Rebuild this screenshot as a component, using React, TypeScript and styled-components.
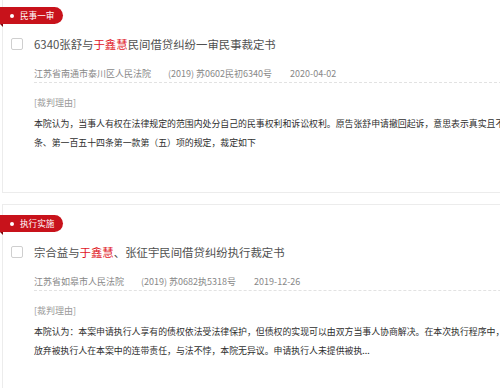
import React, { FC } from "react";
import styled, { createGlobalStyle } from "styled-components";

type CaseItem = {
  tag: string;
  titleParts: { text: string; hit?: boolean }[];
  court: string;
  caseNo: string;
  date: string;
  reason: string[];
};

const cases: CaseItem[] = [
  {
    tag: "民事一审",
    titleParts: [
      { text: "6340张舒与" },
      { text: "于鑫慧", hit: true },
      { text: "民间借贷纠纷一审民事裁定书" },
    ],
    court: "江苏省南通市泰川区人民法院",
    caseNo: "(2019) 苏0602民初6340号",
    date: "2020-04-02",
    reason: [
      "本院认为，当事人有权在法律规定的范围内处分自己的民事权利和诉讼权利。原告张舒申请撤回起诉，意思表示真实且不违反法律规定，依照《中华人民共和国民事诉讼法》第一百四十五",
      "条、第一百五十四条第一款第（五）项的规定，裁定如下",
    ],
  },
  {
    tag: "执行实施",
    titleParts: [
      { text: "宗合益与" },
      { text: "于鑫慧", hit: true },
      { text: "、张征宇民间借贷纠纷执行裁定书" },
    ],
    court: "江苏省如皋市人民法院",
    caseNo: "(2019) 苏0682执5318号",
    date: "2019-12-26",
    reason: [
      "本院认为：本案申请执行人享有的债权依法受法律保护，但债权的实现可以由双方当事人协商解决。在本次执行程序中，申请执行人自愿",
      "放弃被执行人在本案中的连带责任，与法不悖，本院无异议。申请执行人未提供被执...",
    ],
  },
];

const GlobalStyle = createGlobalStyle`
  html, body {
    margin: 0;
    padding: 0;
    background: #ffffff;
    overflow: hidden;
  }
  body {
    font-family: "Noto Sans CJK SC", "Noto Sans", sans-serif;
  }
`;

const Page = styled.div`
  display: flex;
  flex-direction: column;
  gap: 11px;
  width: 640px;
  margin-top: -4px;
  padding-left: 2px;
`;

const Card = styled.div`
  position: relative;
  display: flex;
  gap: 11px;
  padding: 37px 0 40px 8px;
  border: 1px solid #ececec;
  background: #fff;
`;

const Tag = styled.div`
  position: absolute;
  top: 10px;
  left: -3px;
  display: flex;
  align-items: center;
  gap: 6px;
  height: 17px;
  padding: 0 9px 0 10px;
  border-radius: 0 9px 9px 0;
  background: #c8121b;
  color: #fff;
  font-size: 8.6px;
  line-height: 17px;

  &::before {
    content: "";
    width: 4px;
    height: 4px;
    border-radius: 50%;
    background: #fff;
  }

  &::after {
    content: "";
    position: absolute;
    left: 0;
    bottom: -3px;
    border-top: 3px solid #7a080d;
    border-left: 3px solid transparent;
  }
`;

const Checkbox = styled.span`
  flex-shrink: 0;
  width: 12px;
  height: 12px;
  margin-top: 4px;
  box-sizing: border-box;
  border: 1px solid #cfcfcf;
  border-radius: 2px;
  background: #fff;
`;

const Body = styled.div`
  display: flex;
  flex-direction: column;
  flex: 1;
`;

const Title = styled.div`
  font-size: 11.4px;
  line-height: 20px;
  color: #505050;
  white-space: nowrap;
`;

const Hit = styled.span`
  color: #e0161e;
`;

const Meta = styled.div`
  display: flex;
  margin-top: 12px;
  border-bottom: 1px dashed #e2e2e2;
  font-size: 9px;
  line-height: 16px;
  color: #888;
  white-space: nowrap;
`;

const MetaItem = styled.span<{ $gap?: number }>`
  margin-right: ${({ $gap }) => $gap ?? 0}px;
`;

const Label = styled.div`
  padding-top: 12px;
  font-size: 9px;
  line-height: 16px;
  color: #9a9a9a;
`;

const Reason = styled.div`
  margin-top: 3px;
  font-size: 8.9px;
  line-height: 19px;
  color: #2e2e2e;
  white-space: nowrap;
`;

const CaseCard: FC<{ item: CaseItem }> = ({ item }) => (
  <Card>
    <Tag>{item.tag}</Tag>
    <Checkbox />
    <Body>
      <Title>
        {item.titleParts.map((p, i) =>
          p.hit ? <Hit key={i}>{p.text}</Hit> : <span key={i}>{p.text}</span>
        )}
      </Title>
      <Meta>
        <MetaItem $gap={17}>{item.court}</MetaItem>
        <MetaItem $gap={18}>{item.caseNo}</MetaItem>
        <MetaItem>{item.date}</MetaItem>
      </Meta>
      <Label>[裁判理由]</Label>
      <Reason>
        {item.reason.map((line, i) => (
          <div key={i}>{line}</div>
        ))}
      </Reason>
    </Body>
  </Card>
);

export default function App() {
  return (
    <>
      <GlobalStyle />
      <Page>
        {cases.map((c) => (
          <CaseCard key={c.tag} item={c} />
        ))}
      </Page>
    </>
  );
}
